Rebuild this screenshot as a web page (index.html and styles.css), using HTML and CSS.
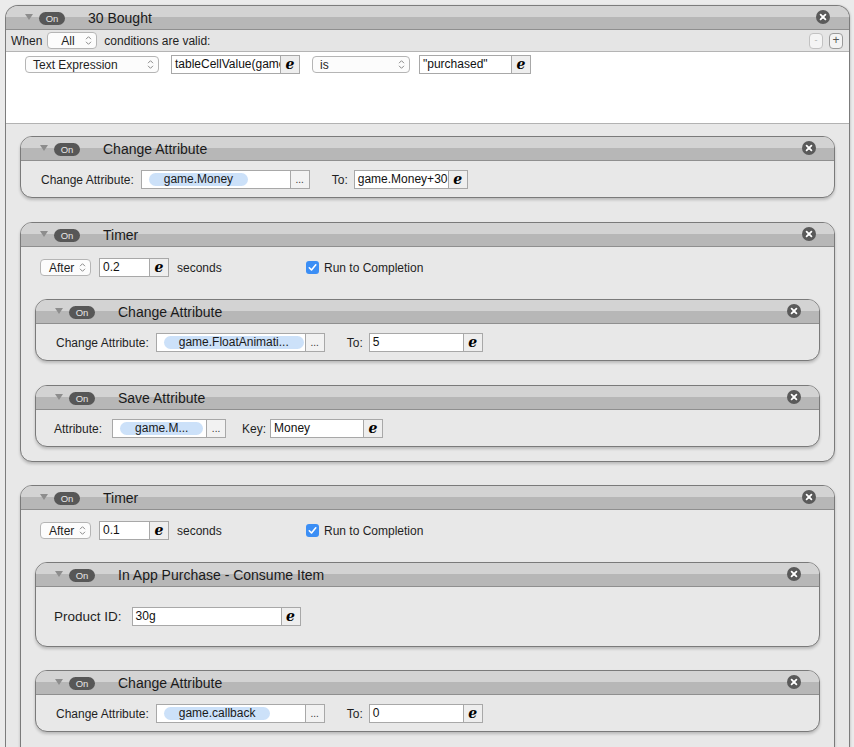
FILE: index.html
```html
<!DOCTYPE html>
<html>
<head>
<meta charset="utf-8">
<link rel="stylesheet" href="styles.css">
</head>
<body>
<div class="outer">
  <div class="hdr">
    <span class="tri"></span><span class="on">On</span><span class="title">30 Bought</span>
    <span class="close"><svg width="14" height="14" viewBox="0 0 14 14"><circle cx="7" cy="7" r="7" fill="#5a5a5a"/><path d="M4.6 4.6 L9.4 9.4 M9.4 4.6 L4.6 9.4" stroke="#fff" stroke-width="1.8" stroke-linecap="round"/></svg></span>
  </div>
  <div class="when">
    <span>When</span>
    <span class="popup pop-all"><span class="ptxt">All</span><svg class="chev" width="7" height="11" viewBox="0 0 7 11"><path d="M1 4.2 L3.5 1.7 L6 4.2 M1 6.8 L3.5 9.3 L6 6.8" fill="none" stroke="#8a8a8a" stroke-width="1"/></svg></span>
    <span class="when-txt">conditions are valid:</span>
    <span class="sqbtns"><span class="sq dis">-</span><span class="sq">+</span></span>
  </div>
  <div class="conds">
    <div class="cond-row">
      <span class="popup pop-expr"><span class="ptxt">Text Expression</span><svg class="chev" width="7" height="11" viewBox="0 0 7 11"><path d="M1 4.2 L3.5 1.7 L6 4.2 M1 6.8 L3.5 9.3 L6 6.8" fill="none" stroke="#8a8a8a" stroke-width="1"/></svg></span>
      <span class="field f-expr"><span class="txt">tableCellValue(game</span><span class="ebtn">e</span></span>
      <span class="popup pop-is"><span class="ptxt">is</span><svg class="chev" width="7" height="11" viewBox="0 0 7 11"><path d="M1 4.2 L3.5 1.7 L6 4.2 M1 6.8 L3.5 9.3 L6 6.8" fill="none" stroke="#8a8a8a" stroke-width="1"/></svg></span>
      <span class="field f-purch"><span class="txt">"purchased"</span><span class="ebtn">e</span></span>
    </div>
  </div>
  <div class="body">

    <div class="card">
      <div class="hdr">
        <span class="tri"></span><span class="on">On</span><span class="title">Change Attribute</span>
        <span class="close"><svg width="14" height="14" viewBox="0 0 14 14"><circle cx="7" cy="7" r="7" fill="#5a5a5a"/><path d="M4.6 4.6 L9.4 9.4 M9.4 4.6 L4.6 9.4" stroke="#fff" stroke-width="1.8" stroke-linecap="round"/></svg></span>
      </div>
      <div class="cbody row">
        <span class="lbl">Change Attribute:</span>
        <span class="field f-attr"><span class="pillwrap"><span class="apill">game.Money</span></span><span class="dots">...</span></span>
        <span class="lbl to">To:</span>
        <span class="field f-to"><span class="txt">game.Money+30</span><span class="ebtn">e</span></span>
      </div>
    </div>

    <div class="card timer">
      <div class="hdr">
        <span class="tri"></span><span class="on">On</span><span class="title">Timer</span>
        <span class="close"><svg width="14" height="14" viewBox="0 0 14 14"><circle cx="7" cy="7" r="7" fill="#5a5a5a"/><path d="M4.6 4.6 L9.4 9.4 M9.4 4.6 L4.6 9.4" stroke="#fff" stroke-width="1.8" stroke-linecap="round"/></svg></span>
      </div>
      <div class="tbody">
        <div class="trow">
          <div class="tleft">
            <span class="popup pop-after"><span class="ptxt">After</span><svg class="chev" width="7" height="11" viewBox="0 0 7 11"><path d="M1 4.2 L3.5 1.7 L6 4.2 M1 6.8 L3.5 9.3 L6 6.8" fill="none" stroke="#8a8a8a" stroke-width="1"/></svg></span>
            <span class="field f-sec"><span class="txt">0.2</span><span class="ebtn">e</span></span>
            <span class="secs">seconds</span>
          </div>
          <span class="chk"><svg width="13" height="13" viewBox="0 0 13 13"><rect x="0" y="0" width="13" height="13" rx="3" fill="#3b8ef5"/><path d="M3.3 6.8 L5.5 9 L9.8 3.8" fill="none" stroke="#fff" stroke-width="1.6" stroke-linecap="round" stroke-linejoin="round"/></svg></span>
          <span class="chk-lbl">Run to Completion</span>
        </div>

        <div class="card nested">
          <div class="hdr">
            <span class="tri"></span><span class="on">On</span><span class="title">Change Attribute</span>
            <span class="close"><svg width="14" height="14" viewBox="0 0 14 14"><circle cx="7" cy="7" r="7" fill="#5a5a5a"/><path d="M4.6 4.6 L9.4 9.4 M9.4 4.6 L4.6 9.4" stroke="#fff" stroke-width="1.8" stroke-linecap="round"/></svg></span>
          </div>
          <div class="cbody row">
            <span class="lbl">Change Attribute:</span>
            <span class="field f-attr"><span class="pillwrap"><span class="apill">game.FloatAnimati...</span></span><span class="dots">...</span></span>
            <span class="lbl to">To:</span>
            <span class="field f-to"><span class="txt">5</span><span class="ebtn">e</span></span>
          </div>
        </div>

        <div class="card nested">
          <div class="hdr">
            <span class="tri"></span><span class="on">On</span><span class="title">Save Attribute</span>
            <span class="close"><svg width="14" height="14" viewBox="0 0 14 14"><circle cx="7" cy="7" r="7" fill="#5a5a5a"/><path d="M4.6 4.6 L9.4 9.4 M9.4 4.6 L4.6 9.4" stroke="#fff" stroke-width="1.8" stroke-linecap="round"/></svg></span>
          </div>
          <div class="cbody row save">
            <span class="lbl l-attr">Attribute:</span>
            <span class="field f-sattr"><span class="pillwrap"><span class="apill">game.M...</span></span><span class="dots">...</span></span>
            <span class="lbl l-key">Key:</span>
            <span class="field f-key"><span class="txt">Money</span><span class="ebtn">e</span></span>
          </div>
        </div>
      </div>
    </div>

    <div class="card timer t2">
      <div class="hdr">
        <span class="tri"></span><span class="on">On</span><span class="title">Timer</span>
        <span class="close"><svg width="14" height="14" viewBox="0 0 14 14"><circle cx="7" cy="7" r="7" fill="#5a5a5a"/><path d="M4.6 4.6 L9.4 9.4 M9.4 4.6 L4.6 9.4" stroke="#fff" stroke-width="1.8" stroke-linecap="round"/></svg></span>
      </div>
      <div class="tbody">
        <div class="trow">
          <div class="tleft">
            <span class="popup pop-after"><span class="ptxt">After</span><svg class="chev" width="7" height="11" viewBox="0 0 7 11"><path d="M1 4.2 L3.5 1.7 L6 4.2 M1 6.8 L3.5 9.3 L6 6.8" fill="none" stroke="#8a8a8a" stroke-width="1"/></svg></span>
            <span class="field f-sec"><span class="txt">0.1</span><span class="ebtn">e</span></span>
            <span class="secs">seconds</span>
          </div>
          <span class="chk"><svg width="13" height="13" viewBox="0 0 13 13"><rect x="0" y="0" width="13" height="13" rx="3" fill="#3b8ef5"/><path d="M3.3 6.8 L5.5 9 L9.8 3.8" fill="none" stroke="#fff" stroke-width="1.6" stroke-linecap="round" stroke-linejoin="round"/></svg></span>
          <span class="chk-lbl">Run to Completion</span>
        </div>

        <div class="card nested">
          <div class="hdr">
            <span class="tri"></span><span class="on">On</span><span class="title">In App Purchase - Consume Item</span>
            <span class="close"><svg width="14" height="14" viewBox="0 0 14 14"><circle cx="7" cy="7" r="7" fill="#5a5a5a"/><path d="M4.6 4.6 L9.4 9.4 M9.4 4.6 L4.6 9.4" stroke="#fff" stroke-width="1.8" stroke-linecap="round"/></svg></span>
          </div>
          <div class="cbody row iap">
            <span class="lbl l-pid">Product ID:</span>
            <span class="field f-pid"><span class="txt">30g</span><span class="ebtn">e</span></span>
          </div>
        </div>

        <div class="card nested">
          <div class="hdr">
            <span class="tri"></span><span class="on">On</span><span class="title">Change Attribute</span>
            <span class="close"><svg width="14" height="14" viewBox="0 0 14 14"><circle cx="7" cy="7" r="7" fill="#5a5a5a"/><path d="M4.6 4.6 L9.4 9.4 M9.4 4.6 L4.6 9.4" stroke="#fff" stroke-width="1.8" stroke-linecap="round"/></svg></span>
          </div>
          <div class="cbody row">
            <span class="lbl">Change Attribute:</span>
            <span class="field f-attr"><span class="pillwrap"><span class="apill">game.callback</span></span><span class="dots">...</span></span>
            <span class="lbl to">To:</span>
            <span class="field f-to"><span class="txt">0</span><span class="ebtn">e</span></span>
          </div>
        </div>
      </div>
    </div>

  </div>
</div>
</body>
</html>
```

FILE: styles.css
```css
html, body {
  margin: 0;
  padding: 0;
}
body {
  background: #ebebeb;
  font-family: "Liberation Sans", Arial, sans-serif;
  font-size: 12px;
  color: #1f1f1f;
  overflow: hidden;
}
.outer {
  margin: 5px 0 0 5px;
  width: 845px;
  box-sizing: border-box;
  border: 1px solid #7c7c7c;
  border-bottom: none;
  border-radius: 13px 13px 0 0;
  background: #e8e8e8;
  overflow: hidden;
  box-shadow: 1px 0 2px rgba(0,0,0,0.12);
}
.hdr {
  height: 23px;
  border-bottom: 1px solid #8f8f8f;
  background: linear-gradient(#d3d3d3 0, #d3d3d3 11px, #b7b7b7 11px, #b7b7b7 100%);
  display: flex;
  align-items: center;
}
.tri {
  width: 0;
  height: 0;
  border-left: 4px solid transparent;
  border-right: 4px solid transparent;
  border-top: 6px solid #8d8d8d;
  margin-left: 19px;
  margin-top: -2px;
}
.on {
  margin-left: 6px;
  width: 26px;
  height: 13px;
  border-radius: 7px;
  background: #575757;
  color: #e6e6e6;
  font-size: 9.5px;
  line-height: 13px;
  text-align: center;
  margin-top: 1px;
}
.title {
  margin-left: 23px;
  font-size: 14px;
  color: #1a1a1a;
  margin-top: 1px;
}
.close {
  margin-left: auto;
  margin-right: 18px;
  width: 14px;
  height: 14px;
  display: flex;
  margin-top: -1px;
}
.outer > .hdr .close { margin-right: 19px; }

/* when row */
.when {
  height: 22px;
  box-sizing: border-box;
  border-bottom: 1px solid #b4b4b4;
  background: #e5e5e5;
  display: flex;
  align-items: center;
  padding-left: 5px;
}
.when-txt { margin-left: 7px; }
.sqbtns {
  margin-left: auto;
  margin-right: 6px;
  display: flex;
  gap: 6px;
}
.sq {
  width: 14px;
  height: 16px;
  box-sizing: border-box;
  border: 1px solid #9a9a9a;
  border-radius: 4px;
  background: #f4f4f4;
  font-size: 12px;
  line-height: 13px;
  text-align: center;
  color: #555;
}
.sq.dis {
  border-color: #c2c2c2;
  color: #b0b0b0;
  font-size: 9px;
}

/* popups */
.popup {
  display: inline-flex;
  align-items: center;
  justify-content: space-between;
  height: 17px;
  box-sizing: border-box;
  border: 1px solid #b5b5b5;
  border-radius: 4px;
  background: #fcfcfc;
  padding: 0 4px 0 7px;
  flex: none;
}
.chev { display: block; }
.pop-all { width: 50px; margin-left: 5px; padding-left: 13px; }
.pop-expr { width: 134px; }
.pop-is { width: 98px; margin-left: 12px; }
.pop-after { width: 51px; padding-left: 8px; }

/* conditions */
.conds {
  height: 72px;
  box-sizing: border-box;
  background: #fff;
  border-bottom: 1px solid #b2b2b2;
  padding-top: 3px;
}
.cond-row {
  display: flex;
  align-items: center;
  padding-left: 19px;
}

/* fields */
.field {
  display: flex;
  height: 19px;
  box-sizing: border-box;
  border: 1px solid #a8a8a8;
  background: #fff;
  flex: none;
}
.field .txt {
  flex: 1;
  min-width: 0;
  padding-left: 3px;
  line-height: 17px;
  overflow: hidden;
  white-space: nowrap;
  color: #111;
}
.ebtn {
  width: 18px;
  flex: none;
  border-left: 1px solid #a8a8a8;
  background: #eeeeee;
  font-family: "DejaVu Serif", "Liberation Serif", serif;
  font-style: italic;
  font-weight: bold;
  font-size: 14px;
  line-height: 16px;
  text-align: center;
  color: #000;
}
.dots {
  width: 18px;
  flex: none;
  border-left: 1px solid #a8a8a8;
  background: #f2f2f2;
  font-size: 10px;
  line-height: 18px;
  text-align: center;
  color: #333;
}
.pillwrap {
  flex: 1;
  min-width: 0;
  display: flex;
  align-items: center;
  padding-left: 7px;
}
.apill {
  height: 13px;
  line-height: 13px;
  border-radius: 7px;
  background: #cce1f9;
  padding: 0 15px;
  white-space: nowrap;
  color: #1a1a1a;
}
.f-expr { width: 129px; margin-left: 12px; }
.f-purch { width: 112px; margin-left: 9px; }
.f-attr { width: 169px; }
.f-to { width: 114px; }
.f-sattr { width: 114px; }
.f-key { width: 113px; }
.f-sec { width: 70px; margin-left: 8px; }
.f-pid { width: 169px; }

/* body & cards */
.body {
  padding: 12px 14px 0 14px;
}
.card {
  border: 1px solid #7a7a7a;
  border-radius: 12px;
  background: #e8e8e8;
  box-shadow: 0 2px 3px rgba(0,0,0,0.2);
  overflow: hidden;
}
.body > .card + .card { margin-top: 24px; }
.body > .card.t2 { margin-top: 23px; }
.row {
  display: flex;
  align-items: center;
}
.cbody {
  height: 36px;
  box-sizing: border-box;
  padding: 9px 0 8px 20px;
}
.lbl { margin-right: 7px; flex: none; }
.lbl.to { margin-left: 22px; margin-right: 6px; }
.save { padding-left: 18px; }
.l-attr { margin-right: 10px; }
.l-key { margin-left: 16px; margin-right: 4px; }
.iap {
  height: 59px;
  padding: 20px 0 20px 18px;
}
.l-pid { font-size: 13.5px; margin-right: 10px; }

/* timer */
.tbody {
  padding: 11px 14px 14px 14px;
}
.t2 .tbody { padding-bottom: 40px; }
.trow {
  display: flex;
  align-items: center;
  height: 19px;
  padding-left: 5px;
}
.tleft {
  width: 266px;
  display: flex;
  align-items: center;
  flex: none;
}
.secs { margin-left: 8px; }
.chk { display: flex; width: 13px; height: 13px; }
.chk-lbl { margin-left: 5px; }
.nested { margin-top: 24px; }
.trow + .nested { margin-top: 22px; }
.t2 .nested + .nested { margin-top: 23px; }
```
